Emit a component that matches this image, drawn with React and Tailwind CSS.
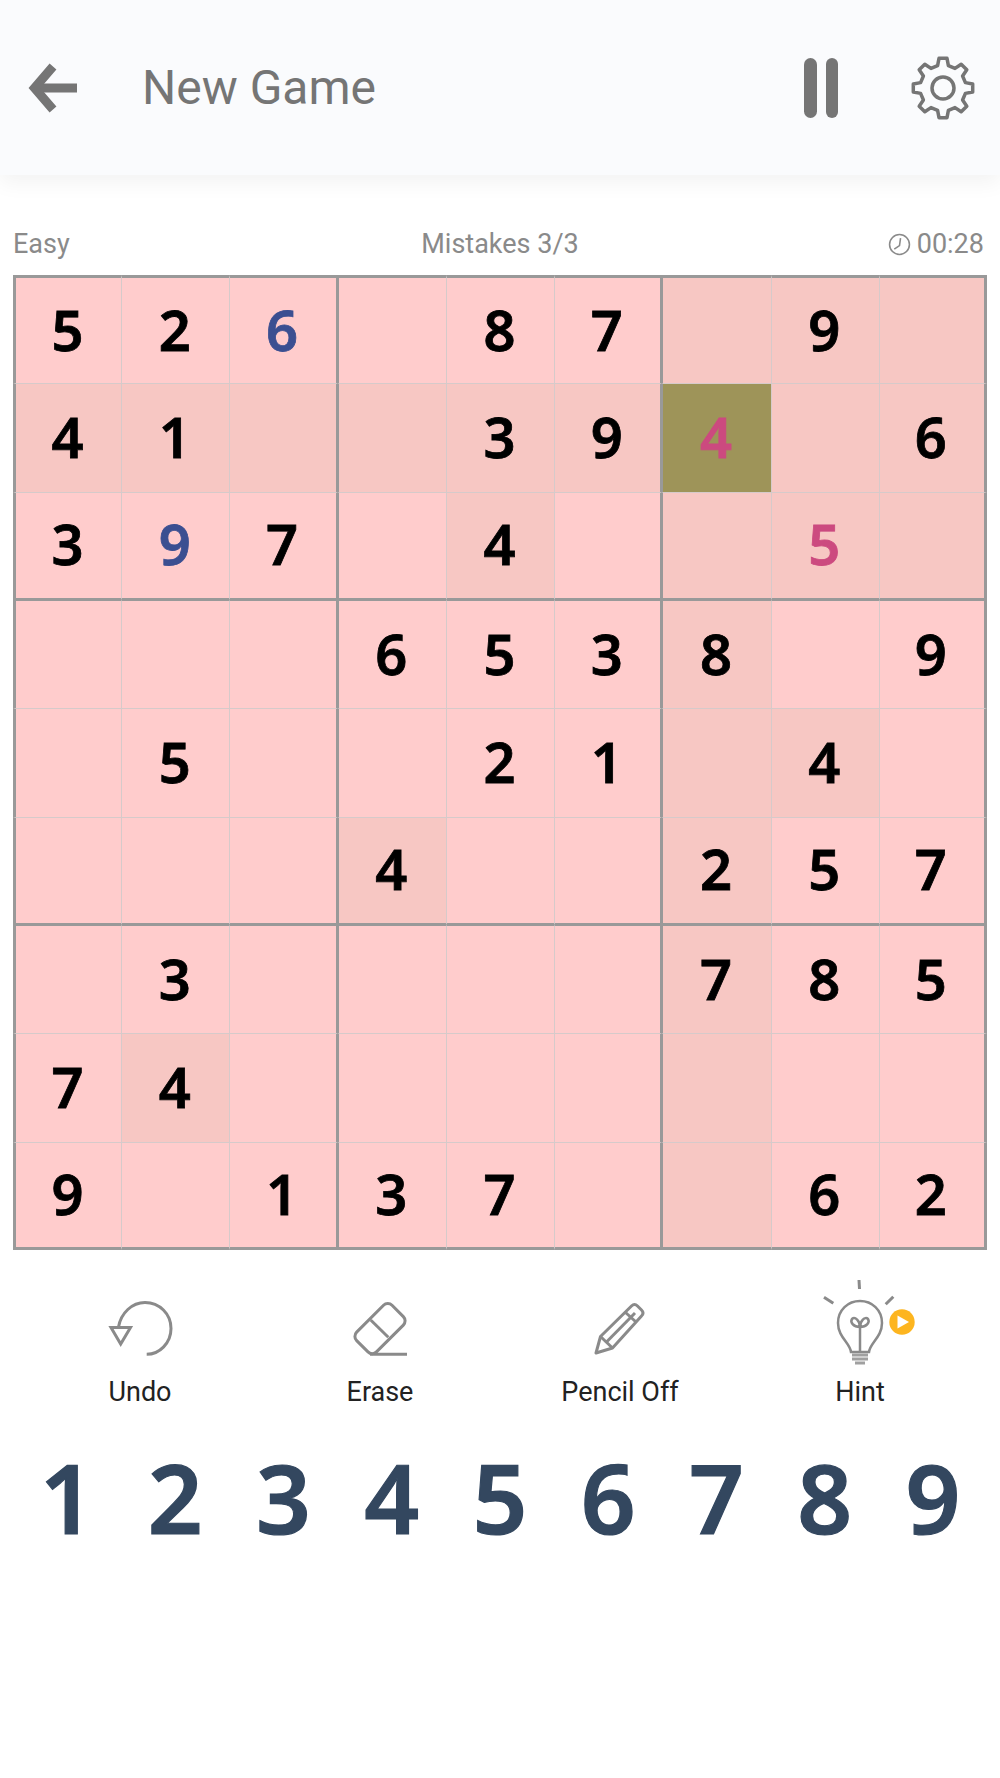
const board = [
  "526 87 9 ",
  "41  394 6",
  "397 4  5 ",
  "   6538 9",
  " 5  21 4 ",
  "   4  257",
  " 3    785",
  "74       ",
  "9 137  62",
];

const blue = ["0-2", "2-1"];
const red = ["1-6", "2-7"];
const shaded = [
  "0-6", "0-7", "0-8",
  "1-0", "1-1", "1-2", "1-3", "1-4", "1-5", "1-7", "1-8",
  "2-4", "2-6", "2-7", "2-8",
  "3-6", "4-6", "4-7", "5-3", "5-6", "6-6", "7-1", "7-6", "8-6",
];

function cellClass(r, c) {
  const key = `${r}-${c}`;
  let bg = "bg-[#ffcccc]";
  if (shaded.includes(key)) bg = "bg-[#f7c7c3]";
  if (key === "1-6") bg = "bg-[#9e9459]";
  let color = "text-black";
  if (blue.includes(key)) color = "text-[#3b4f91]";
  if (red.includes(key)) color = "text-[#cc4a7f]";
  // box lines straddle the cell edge: 2px on one side, 1px on the other
  const left = c === 0 ? "border-l-[3px] border-l-[#999999]" : c === 3 || c === 6 ? "border-l border-l-[#999999]" : "border-l border-l-[#d6caca]";
  const top = r === 0 ? "border-t-[3px] border-t-[#999999]" : r === 3 || r === 6 ? "border-t border-t-[#999999]" : "border-t border-t-[#d6caca]";
  const right = c === 8 ? "border-r-[3px] border-r-[#999999]" : c === 2 || c === 5 ? "border-r-2 border-r-[#999999]" : "";
  const bottom = r === 8 ? "border-b-[3px] border-b-[#999999]" : r === 2 || r === 5 ? "border-b-2 border-b-[#999999]" : "";
  return `flex items-center justify-center pb-[4px] pr-[2px] ${bg} ${color} ${left} ${top} ${right} ${bottom}`;
}

function gearPath(cx, cy, outer, inner, teeth) {
  const pts = [];
  const step = (Math.PI * 2) / teeth;
  for (let i = 0; i < teeth; i++) {
    const a = i * step - Math.PI / 2;
    const p = (rad, off) => [cx + rad * Math.cos(a + off * step), cy + rad * Math.sin(a + off * step)];
    pts.push(p(inner, -0.3), p(outer, -0.17), p(outer, 0.17), p(inner, 0.3));
  }
  return "M" + pts.map((p) => p[0].toFixed(1) + " " + p[1].toFixed(1)).join("L") + "Z";
}

function UndoIcon() {
  return (
    <svg width="100" height="90" viewBox="0 0 100 90" fill="none" stroke="#8a8a8a" strokeWidth="3">
      <path d="M21 52.5H40.5L30.7 69Z" strokeLinejoin="miter" />
      <path d="M28.5 52C31 38 42 27.5 55 27.5C69.5 27.5 81 39 81 53.5C81 68 69.5 79.3 56.7 79.3" />
    </svg>
  );
}

function EraseIcon() {
  return (
    <svg width="100" height="90" viewBox="0 0 100 90" fill="none" stroke="#8a8a8a" strokeWidth="3">
      <rect x="25" y="39.6" width="50" height="28" rx="6" transform="rotate(-45 50 53.6)" />
      <path d="M40.7 45L58.3 62.3" />
      <path d="M40 79.3H77" />
    </svg>
  );
}

function PencilIcon() {
  return (
    <svg width="100" height="90" viewBox="0 0 100 90" fill="none" stroke="#8a8a8a" strokeWidth="3" strokeLinejoin="round">
      <path d="M26 78L30.5 61.5L61.5 31Q64.5 28 67.5 31L71.5 35Q74.5 38 71.5 41L42.5 73Z" />
      <path d="M30.5 61.5L42.5 73" />
      <path d="M36.5 67L65 38" />
      <path d="M55 37L66 47" />
    </svg>
  );
}

function HintIcon() {
  return (
    <svg width="120" height="90" viewBox="0 0 120 90" fill="none" stroke="#8a8a8a" strokeWidth="2.5">
      <path d="M59 5L59.5 14M24 22.3L33.3 28.3M93.3 21.7L85.7 29.3" strokeWidth="3" />
      <path d="M51 77C50 68 38 62 38 48C38 35 48 26 60 26C72 26 82 35 82 48C82 62 70 68 69 77Z" />
      <path d="M60 77V50" />
      <path d="M60 52C53 52 50 47 52 44C55 41 60 46 60 52C60 46 65 41 68 44C70 47 67 52 60 52Z" />
      <path d="M52 80H68M52 84H68M55 88H65" stroke="#a0a0a0" strokeWidth="3" />
      <circle cx="102" cy="47" r="12.7" fill="#fdb51f" stroke="none" />
      <path d="M97.5 40.5L109 47L97.5 53.5Z" fill="#fff" stroke="none" />
    </svg>
  );
}

const tools = [
  { label: "Undo", icon: UndoIcon },
  { label: "Erase", icon: EraseIcon },
  { label: "Pencil Off", icon: PencilIcon },
  { label: "Hint", icon: HintIcon },
];

export default function App() {
  return (
    <div className="min-h-[1778px] bg-white font-['Roboto',sans-serif]">
      <header className="flex h-[175px] items-center bg-[#fafbfd] pl-[25px] pr-[24px] shadow-[0_8px_20px_rgba(0,0,0,0.05)]">
        <svg width="56" height="50" viewBox="0 0 56 50" fill="none" stroke="#757575" strokeWidth="9">
          <path d="M52 25H10" />
          <path d="M28 3.5L9.5 25L28 46.5" />
        </svg>
        <h1 className="ml-[61px] text-[48px] leading-none font-normal text-[#757575]">New Game</h1>
        <div className="ml-auto flex items-center">
          <div className="flex gap-[9px]">
            <span className="h-[60px] w-[13px] rounded-full bg-[#757575]" />
            <span className="h-[60px] w-[12px] rounded-full bg-[#757575]" />
          </div>
          <svg className="ml-[72px]" width="66" height="66" viewBox="0 0 66 66" fill="none" stroke="#757575" strokeWidth="3.5" strokeLinejoin="round">
            <path d={gearPath(33, 33, 30, 23, 8)} />
            <circle cx="33" cy="33" r="11" />
          </svg>
        </div>
      </header>

      <div className="grid h-[100px] grid-cols-3 items-center px-[13px] pt-[38px] text-[27px] leading-none text-[#8a8a8a]">
        <span>Easy</span>
        <span className="text-center">Mistakes 3/3</span>
        <span className="flex items-center justify-end gap-[6px] pr-[3px]">
          <svg width="23" height="23" viewBox="0 0 22 22" fill="none" stroke="#8a8a8a" strokeWidth="1.5">
            <circle cx="11" cy="11" r="9.5" />
            <path d="M12 5L11 12L6 15.5" />
          </svg>
          00:28
        </span>
      </div>

      <div className="mx-[13px] grid h-[975px] w-[974px] grid-cols-9 grid-rows-9 font-['Noto_Sans',sans-serif] text-[56px] leading-none font-semibold [-webkit-text-stroke:0.8px_currentColor]">
        {board.map((row, r) =>
          row.split("").map((ch, c) => (
            <div key={`${r}-${c}`} className={cellClass(r, c)}>
              {ch === " " ? "" : ch}
            </div>
          ))
        )}
      </div>

      <div className="mx-[20px] mt-[25px] grid grid-cols-4">
        {tools.map(({ label, icon: Icon }) => (
          <div key={label} className="flex flex-col items-center">
            <Icon />
            <span className="mt-[14px] text-[27px] leading-none text-[#222222]">{label}</span>
          </div>
        ))}
      </div>

      <div className="mx-[13px] mt-[43px] grid grid-cols-9 font-['Noto_Sans',sans-serif] text-[96px] leading-none font-semibold text-[#33475f] [-webkit-text-stroke:1.2px_currentColor]">
        {[1, 2, 3, 4, 5, 6, 7, 8, 9].map((n) => (
          <div key={n} className="text-center">
            {n}
          </div>
        ))}
      </div>
    </div>
  );
}
